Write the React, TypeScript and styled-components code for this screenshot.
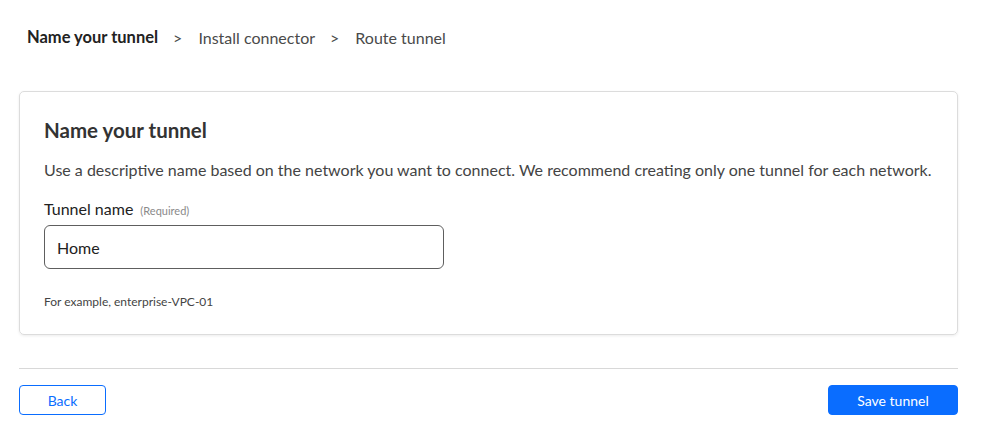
import React from "react";
import styled, { createGlobalStyle } from "styled-components";

const Global = createGlobalStyle`
  html, body { margin: 0; padding: 0; background: #fff; }
  body { font-family: Lato, "Noto Sans", sans-serif; color: #36393a; }
  * { box-sizing: border-box; }
`;

const Page = styled.div`
  width: 991px;
  padding: 0 33px 0 19px;
`;

const Crumbs = styled.nav`
  display: flex;
  align-items: center;
  height: 74px;
  padding-left: 8px;
`;

const Crumb = styled.span<{ $active?: boolean }>`
  font-size: ${(p) => (p.$active ? "16.5px" : "16px")};
  font-weight: ${(p) => (p.$active ? 700 : 400)};
  color: ${(p) => (p.$active ? "#222" : "#4a4a4a")};
`;

const Sep = styled.span`
  margin: 0 16px 0 15px;
  font-size: 16px;
  color: #4a4a4a;
`;

const Card = styled.section`
  margin-top: 17px;
  border: 1px solid #dcdcdc;
  border-radius: 5px;
  box-shadow: 0 1px 3px rgba(0, 0, 0, 0.08);
  padding: 25px 24px 23px;
`;

const Title = styled.h2`
  margin: 0;
  font-size: 20.5px;
  font-weight: 700;
  color: #333;
  line-height: 26px;
`;

const Desc = styled.p`
  margin: 16px 0 0;
  font-size: 16px;
  line-height: 22px;
  color: #444;
`;

const Label = styled.label`
  display: flex;
  align-items: baseline;
  gap: 7px;
  margin-top: 17px;
  font-size: 16px;
  color: #222;
  line-height: 22px;
`;

const Req = styled.span`
  font-size: 11px;
  color: #8a8a8a;
`;

const Input = styled.input`
  display: block;
  margin-top: 3px;
  width: 400px;
  height: 44px;
  border: 1px solid #5e5e5e;
  border-radius: 6px;
  padding: 0 12px;
  font: inherit;
  font-size: 16px;
  color: #222;
  outline: none;
`;

const Help = styled.div`
  margin-top: 24px;
  font-size: 12px;
  line-height: 18px;
  color: #444;
`;

const Divider = styled.hr`
  margin: 33px 0 0;
  border: 0;
  border-top: 1px solid #d8d8d8;
`;

const Actions = styled.div`
  display: flex;
  justify-content: space-between;
  margin-top: 16px;
`;

const Button = styled.button<{ $primary?: boolean }>`
  height: 30px;
  padding: 0 20px;
  min-width: ${(p) => (p.$primary ? "130px" : "87px")};
  border-radius: 4px;
  font-family: inherit;
  font-size: 14px;
  border: 1px solid #0a6dff;
  background: ${(p) => (p.$primary ? "#0a6dff" : "#fff")};
  color: ${(p) => (p.$primary ? "#fff" : "#0a6dff")};
  cursor: pointer;
`;

export default function App() {
  return (
    <Page>
      <Global />
      <Crumbs>
        <Crumb $active>Name your tunnel</Crumb>
        <Sep>&gt;</Sep>
        <Crumb>Install connector</Crumb>
        <Sep>&gt;</Sep>
        <Crumb>Route tunnel</Crumb>
      </Crumbs>
      <Card>
        <Title>Name your tunnel</Title>
        <Desc>
          Use a descriptive name based on the network you want to connect. We recommend creating only one tunnel for each network.
        </Desc>
        <Label>
          Tunnel name <Req>(Required)</Req>
        </Label>
        <Input defaultValue="Home" />
        <Help>For example, enterprise-VPC-01</Help>
      </Card>
      <Divider />
      <Actions>
        <Button>Back</Button>
        <Button $primary>Save tunnel</Button>
      </Actions>
    </Page>
  );
}
